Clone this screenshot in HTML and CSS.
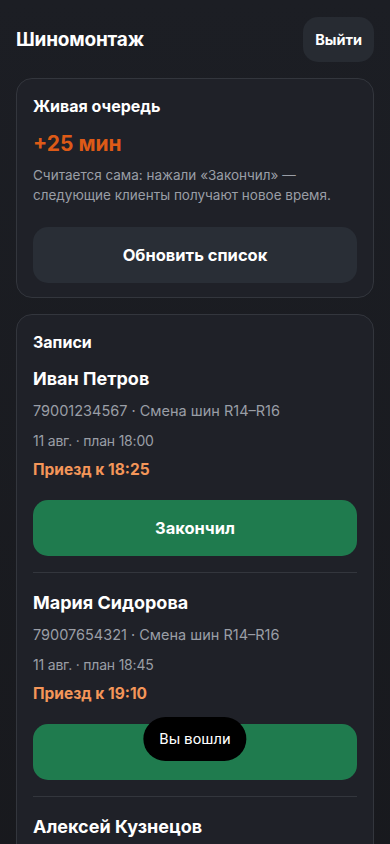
FILE: index.html
```html
<!DOCTYPE html>
<html lang="ru">
<head>
    <meta charset="UTF-8">
    <meta name="viewport" content="width=device-width, initial-scale=1.0">
    <title>Шиномонтаж</title>
    <link rel="stylesheet" href="styles.css">
</head>
<body>
    <main>
        <header class="top">
            <h1>Шиномонтаж</h1>
            <button class="btn-exit">Выйти</button>
        </header>

        <section class="card">
            <h2>Живая очередь</h2>
            <div class="delay">+25 мин</div>
            <p class="hint">Считается сама: нажали «Закончил» — следующие клиенты получают новое время.</p>
            <button class="btn btn-gray">Обновить список</button>
        </section>

        <section class="card">
            <h2>Записи</h2>
            <div class="entry">
                <div class="name">Иван Петров</div>
                <div class="meta">79001234567 · Смена шин R14–R16</div>
                <div class="date">11 авг. · план 18:00</div>
                <div class="eta">Приезд к 18:25</div>
                <button class="btn btn-green">Закончил</button>
            </div>
            <div class="entry">
                <div class="name">Мария Сидорова</div>
                <div class="meta">79007654321 · Смена шин R14–R16</div>
                <div class="date">11 авг. · план 18:45</div>
                <div class="eta">Приезд к 19:10</div>
                <button class="btn btn-green">Закончил</button>
            </div>
            <div class="entry">
                <div class="name">Алексей Кузнецов</div>
                <div class="meta">79005551122 · Смена шин R17–R19</div>
                <div class="date">11 авг. · план 19:30</div>
                <div class="eta">Приезд к 19:55</div>
                <button class="btn btn-green">Закончил</button>
            </div>
        </section>
    </main>
    <div class="toast">Вы вошли</div>
</body>
</html>
```

FILE: styles.css
```css
body {
    margin: 0;
    background: linear-gradient(180deg, #1c1e24 0%, #17181c 100%);
    background-color: #17181c;
    color: white;
    font-family: Inter, 'Noto Sans', sans-serif;
    min-height: 100vh;
}

main {
    padding: 16px;
    display: flex;
    flex-direction: column;
    gap: 16px;
}

.top {
    display: flex;
    justify-content: space-between;
    align-items: center;
    height: 46px;
}

.top h1 {
    margin: 0;
    font-size: 19px;
    font-weight: 700;
    letter-spacing: -0.2px;
}

button {
    font-family: inherit;
    color: white;
    border: none;
    cursor: pointer;
}

.btn-exit {
    background-color: #272b32;
    height: 45px;
    padding: 0 12px;
    border-radius: 15px;
    font-size: 14.5px;
    font-weight: 700;
}

.card {
    background-color: #1f2128;
    border: 1px solid #33363d;
    border-radius: 16px;
    padding: 17px 16px 14px;
}

.card h2 {
    margin: 0;
    font-size: 16px;
    font-weight: 700;
    line-height: 20px;
}

.delay {
    margin-top: 15px;
    color: #dd5a17;
    font-size: 21px;
    font-weight: 700;
    line-height: 26px;
}

.hint {
    margin: 8px 0 0;
    color: #9a9ea6;
    font-size: 13.5px;
    line-height: 20px;
}

.btn {
    display: block;
    width: 100%;
    height: 56px;
    border-radius: 15px;
    font-size: 16.5px;
    font-weight: 700;
}

.btn-gray {
    margin-top: 22px;
    background-color: #292e36;
}

.btn-green {
    margin-top: 18px;
    background-color: #1f7b4e;
}

.entry {
    padding: 15px 0 16px;
    border-bottom: 1px solid #33363d;
}

.entry + .entry {
    padding-top: 18px;
}

.name {
    font-size: 18px;
    font-weight: 700;
    line-height: 24px;
}

.meta {
    margin-top: 8px;
    color: #9a9ea6;
    font-size: 14.5px;
    line-height: 24px;
}

.date {
    margin-top: 6px;
    color: #9a9ea6;
    font-size: 14px;
    line-height: 24px;
    letter-spacing: -0.2px;
}

.eta {
    margin-top: 5px;
    color: #f49659;
    font-size: 15.5px;
    font-weight: 700;
    line-height: 24px;
}

.toast {
    position: fixed;
    left: 50%;
    bottom: 83px;
    transform: translateX(-50%);
    background-color: #000;
    color: white;
    font-family: Roboto, sans-serif;
    font-size: 15px;
    padding: 0 16px;
    height: 44px;
    line-height: 44px;
    border-radius: 22px;
}
```
